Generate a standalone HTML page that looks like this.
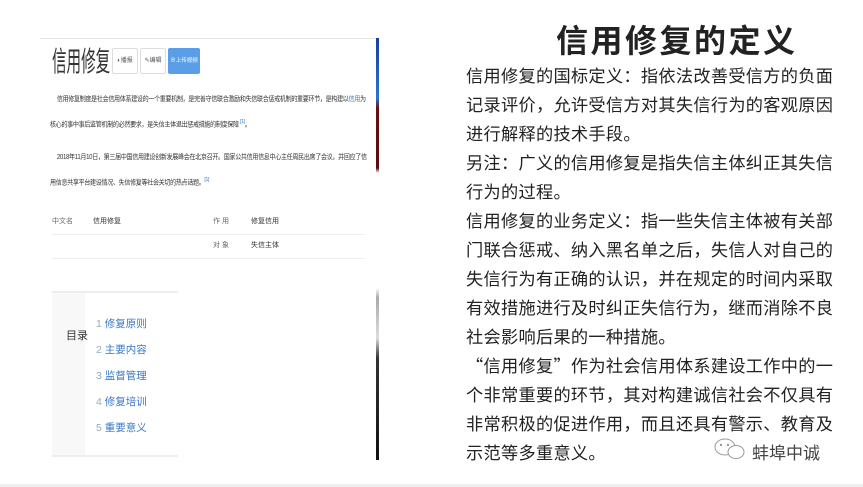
<!DOCTYPE html>
<html><head><meta charset="utf-8"><style>
body{margin:0;width:863px;height:487px;background:#fff;position:relative;overflow:hidden;font-family:"Liberation Sans","Noto Sans CJK SC",sans-serif}
.a{position:absolute}
.shot{left:40px;top:38px;width:336px;height:422px;background:#fff;border-top:1px solid #e4e4e4}
.strip{left:376px;top:38px;width:3px;height:422px;background:linear-gradient(#1b3d9c 0,#2a74d0 60px,#6a1010 70px,#5a0c0c 130px,#fff 135px,#fff 250px,#aaa 260px,#ddd 300px,#333 320px,#111 422px)}
.s{font-size:7px;color:#333;line-height:22px;white-space:nowrap;letter-spacing:-0.35px;transform:scaleX(0.86);transform-origin:0 0}
.r{left:466px;width:390px;font-size:17.2px;line-height:29px;color:#222;letter-spacing:0.3px;white-space:nowrap;font-family:"Noto Sans CJK SC",sans-serif}
.toc{color:#3a78c8;font-size:10.5px}
</style></head><body>
<div class="a shot"></div>
<div class="a strip"></div>
<div class="a" style="left:52px;top:40px;font-size:28px;color:#333;transform:scaleX(0.52);transform-origin:0 0;white-space:nowrap">信用修复</div>
<div class="a" style="left:112px;top:48px;width:24px;height:24px;border:1px solid #ddd;border-radius:2px;font-size:6px;color:#555;line-height:24px;text-align:center;background:#fff">◐播报</div>
<div class="a" style="left:140px;top:48px;width:24px;height:24px;border:1px solid #ddd;border-radius:2px;font-size:6px;color:#555;line-height:24px;text-align:center;background:#fff">✎编辑</div>
<div class="a" style="left:168px;top:48px;width:32px;height:26px;background:#5b9ee8;border-radius:2px;font-size:5.5px;color:#fff;line-height:26px;text-align:center;white-space:nowrap">⊕上传视频</div>
<div class="a s" style="left:50px;top:89px">&nbsp;&nbsp;&nbsp;&nbsp;&nbsp;信用修复制度是社会信用体系建设的一个重要机制，是完善守信联合激励和失信联合惩戒机制的重要环节，是构建以<span style="color:#3a78c8">信用</span>为<br>核心的事中事后监管机制的必然要求，是失信主体退出惩戒措施的制度保障 <sup style="color:#3a78c8">[1]</sup>。</div>
<div class="a s" style="left:50px;top:147px">&nbsp;&nbsp;&nbsp;&nbsp;&nbsp;2018年11月10日，第三届中国信用建设创新发展峰会在北京召开。国家公共信用信息中心主任周民出席了会议，并回应了信<br>用信息共享平台建设情况、失信修复等社会关切的热点话题。<sup style="color:#3a78c8">[1]</sup></div>
<div class="a" style="left:52px;top:216px;font-size:7px;color:#666">中文名</div>
<div class="a" style="left:93px;top:216px;font-size:7px;color:#333">信用修复</div>
<div class="a" style="left:213px;top:216px;font-size:7px;color:#666">作 用</div>
<div class="a" style="left:251px;top:216px;font-size:7px;color:#333">修复信用</div>
<div class="a" style="left:52px;top:234px;width:313px;border-top:1px solid #eee"></div>
<div class="a" style="left:213px;top:240px;font-size:7px;color:#666">对 象</div>
<div class="a" style="left:251px;top:240px;font-size:7px;color:#333">失信主体</div>
<div class="a" style="left:52px;top:258px;width:313px;border-top:1px solid #eee"></div>
<div class="a" style="left:52px;top:291px;width:126px;height:162px;border-top:2px solid #eee;border-bottom:2px solid #eee"></div>
<div class="a" style="left:52px;top:293px;width:33px;height:162px;background:#f8f8f8"></div>
<div class="a" style="left:66px;top:327px;font-size:11px;color:#333">目录</div>
<div class="a toc" style="left:96px;top:311px;line-height:26px"><span style="color:#9ab">1</span> 修复原则<br><span style="color:#9ab">2</span> 主要内容<br><span style="color:#9ab">3</span> 监督管理<br><span style="color:#9ab">4</span> 修复培训<br><span style="color:#9ab">5</span> 重要意义</div>
<div class="a" style="left:556px;top:16px;font-size:32px;font-weight:bold;color:#222;letter-spacing:2.5px;white-space:nowrap">信用修复的定义</div>
<div class="a r" style="top:60px">信用修复的国标定义：指依法改善受信方的负面<br>记录评价，允许受信方对其失信行为的客观原因<br>进行解释的技术手段。<br>另注：广义的信用修复是指失信主体纠正其失信<br>行为的过程。<br>信用修复的业务定义：指一些失信主体被有关部<br>门联合惩戒、纳入黑名单之后，失信人对自己的<br>失信行为有正确的认识，并在规定的时间内采取<br>有效措施进行及时纠正失信行为，继而消除不良<br>社会影响后果的一种措施。<br>“信用修复”作为社会信用体系建设工作中的一<br>个非常重要的环节，其对构建诚信社会不仅具有<br>非常积极的促进作用，而且还具有警示、教育及<br>示范等多重意义。</div>
<svg class="a" style="left:712px;top:436px" width="36" height="26"><ellipse cx="13" cy="11" rx="10" ry="8" fill="#fff" stroke="#999"/><ellipse cx="24" cy="16" rx="8" ry="6.5" fill="#fff" stroke="#999"/><circle cx="9" cy="9" r="1.2" fill="#999"/><circle cx="16" cy="9" r="1.2" fill="#999"/></svg>
<div class="a" style="left:752px;top:439px;font-size:17px;color:#444">蚌埠中诚</div>
<div class="a" style="left:0;top:484px;width:863px;height:3px;background:#eee"></div>
</body></html>
